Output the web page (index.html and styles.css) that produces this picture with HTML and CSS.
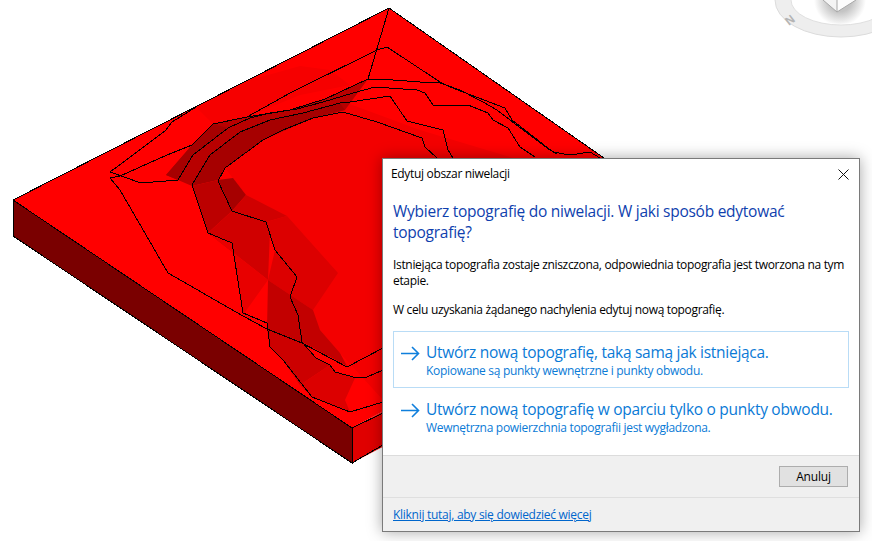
FILE: index.html
```html
<!DOCTYPE html>
<html lang="pl">
<head>
<meta charset="utf-8">
<title>Edytuj obszar niwelacji</title>
<link rel="stylesheet" href="styles.css">
</head>
<body>
<main class="desktop">
  <svg class="scene" width="872" height="541" viewBox="0 0 872 541" aria-hidden="true">
    <defs>
      <radialGradient id="cubeShadow" gradientUnits="userSpaceOnUse" cx="840" cy="0" r="26">
        <stop offset="0.45" stop-color="#c4c4c4"/>
        <stop offset="1" stop-color="#ffffff"/>
      </radialGradient>
    </defs>
    <!-- view cube -->
    <ellipse class="ring" cx="841" cy="0" rx="66" ry="37"/>
    <ellipse class="ring-hole" cx="841" cy="0" rx="50" ry="25"/>
    <ellipse cx="840" cy="0" rx="40" ry="24" fill="url(#cubeShadow)"/>
    <polygon class="cube-left" points="823,0 837,12 837,0"/>
    <polygon class="cube-right" points="837,0 837,12 856,0"/>
    <polyline class="cube-line" points="823,0 837,12 856,0"/>
    <polyline class="cube-line" points="837,12 837,0"/>
    <text class="ring-letter" x="0" y="0" transform="translate(789 26) rotate(-38)">N</text>

    <!-- terrain solid -->
    <polygon class="side-left" points="13,200 352,428 352,463 13,236"/>
    <polygon class="side-right" points="352,428 700,240 700,280 352,463"/>
    <polygon class="top" points="389,8 700,225 700,240 352,428 13,200"/>

    <!-- shaded facets -->
    <polygon class="f-e8" points="196,107 250,80 300,66 330,70 350,85 300,95 247,117 213,124"/>
    <polygon class="f-f0" points="225,168 263,140 313,118 347,103 420,130 520,160 600,180 640,250 383,400 340,353 320,330 300,290 270,230 246,195"/>
    <polygon class="f-b0" points="166,175 192,145 213,124 247,117 290,110 325,99 368,79 345,110 313,118 283,130 240,145 218,172 192,186 178,180"/>
    <polygon class="f-a8" points="192,145 213,124 228,128 193,155 178,180 166,175"/>
    <polygon class="f-a8" points="210,155 240,132 270,120 303,113 340,103 345,110 313,118 263,140 225,168 218,180 192,186"/>
    <polygon class="f-b8" points="192,186 218,180 232,211 208,233"/>
    <polygon class="f-a8" points="218,180 233,178 246,195 232,211"/>
    <polygon class="f-d0" points="232,211 246,195 287,216 266,222"/>
    <polygon class="f-d0" points="208,233 232,211 266,222 270,230 268,280"/>
    <polygon class="f-d8" points="266,222 287,216 338,273 313,310 268,280 275,250"/>
    <polygon class="f-e0" points="208,233 232,243 243,315 268,280"/>
    <polygon class="f-c0" points="268,280 313,310 320,330 340,353 347,366 302,342 267,329"/>
    <polygon class="f-c8" points="267,329 302,342 316,358 330,365 300,385 283,360 270,347"/>
    <polygon class="f-d8" points="300,385 330,365 335,372 355,378 345,400 350,412 312,397"/>

    <!-- contours -->
    <polyline class="contour" points="389,8 368,79"/>
    <polyline class="contour" points="110,172 165,131 172,122 196,107"/>
    <polyline class="contour" points="247,117 290,93 377,50 387,47 440,82 450,87 505,108 512,120 553,152 570,155 590,152 620,170"/>
    <polyline class="contour" points="557,154 550,150 527,133 497,110 483,102 460,90 440,83 420,82 393,80 368,79 325,99 290,110 247,117 213,124 192,145 167,155 120,176 110,178 120,190 168,273 243,316 267,329 302,343 347,367 383,348"/>
    <polyline class="contour" points="110,172 141,183 178,180 193,155 228,128 250,118 270,113 297,109 323,102 353,93 375,87 417,90 425,93 433,105 468,105 488,113 493,120 508,128 520,147 535,157"/>
    <polyline class="contour" points="453,158 448,150 443,130 407,121 390,96 350,102 340,103 303,113 270,120 240,132 210,155 192,185 208,233 232,243 243,313 267,323 270,347 283,360 312,397 350,412 383,402"/>
    <polyline class="contour" points="437,158 425,147 422,138 377,122 343,112 313,118 283,130 263,140 225,168 218,181 232,211 266,222 275,250 297,277 290,297 298,315 302,342 316,358 330,365 335,372 357,378 367,377 383,370"/>
    <polyline class="contour" points="352,428 383,413"/>

    <!-- outline -->
    <polyline class="edge" points="13,236 13,200 389,8 700,225"/>
    <polyline class="edge" points="13,200 352,428 352,463 13,236"/>
    <polyline class="edge" points="352,463 383,445"/>
  </svg>

  <section class="dialog" role="dialog" aria-labelledby="dlg-title">
    <header class="titlebar">
      <h1 id="dlg-title" class="title">Edytuj obszar niwelacji</h1>
      <svg class="close" width="11" height="11" viewBox="0 0 11 11" aria-hidden="true">
        <path d="M0.5 0.5L10.5 10.5M10.5 0.5L0.5 10.5"/>
      </svg>
    </header>
    <div class="content">
      <h2 class="heading">Wybierz topografię do niwelacji. W jaki sposób edytować topografię?</h2>
      <p class="body-text first">Istniejąca topografia zostaje zniszczona, odpowiednia topografia jest tworzona na tym etapie.</p>
      <p class="body-text second">W celu uzyskania żądanego nachylenia edytuj nową topografię.</p>
      <div class="choices">
        <a class="choice hover">
          <svg class="arrow" width="19" height="15" viewBox="0 0 19 15" aria-hidden="true"><path d="M0 7.5H17.5M11 1L17.5 7.5L11 14"/></svg>
          <span class="choice-text">
            <span class="choice-main">Utwórz nową topografię, taką samą jak istniejąca.</span>
            <span class="choice-sub">Kopiowane są punkty wewnętrzne i punkty obwodu.</span>
          </span>
        </a>
        <a class="choice">
          <svg class="arrow" width="19" height="15" viewBox="0 0 19 15" aria-hidden="true"><path d="M0 7.5H17.5M11 1L17.5 7.5L11 14"/></svg>
          <span class="choice-text">
            <span class="choice-main">Utwórz nową topografię w oparciu tylko o punkty obwodu.</span>
            <span class="choice-sub">Wewnętrzna powierzchnia topografii jest wygładzona.</span>
          </span>
        </a>
      </div>
    </div>
    <div class="actions"><button class="cancel" type="button">Anuluj</button></div>
    <footer class="footer"><a class="more" href="#">Kliknij tutaj, aby się dowiedzieć więcej</a></footer>
  </section>
</main>
</body>
</html>
```
FILE: styles.css
```css
* { box-sizing: border-box; }
html, body { margin: 0; padding: 0; background: #fff; }
.desktop { position: relative; width: 872px; height: 541px; overflow: hidden; font-family: "Open Sans", "Noto Sans", sans-serif; }
.scene { position: absolute; left: 0; top: 0; display: block; }

.ring { fill: #eeeeee; stroke: #dcdcdc; stroke-width: 1; }
.ring-hole { fill: #fff; stroke: #e0e0e0; stroke-width: 1; }
.cube-left { fill: #f4f4f4; }
.cube-right { fill: #fcfcfc; }
.cube-line { fill: none; stroke: #a8a8a8; stroke-width: 1; }
.ring-letter { font-family: "Liberation Sans", sans-serif; font-size: 12px; font-weight: 700; fill: #b4b4b4; }

.side-left { fill: #7a0000; }
.side-right { fill: #e00000; }
.top { fill: #ff0000; }
.f-e8 { fill: #f60000; }
.f-f0 { fill: #f30000; }
.f-b0 { fill: #b80000; }
.f-a8 { fill: #a60000; }
.f-b8 { fill: #bc0000; }
.f-c0 { fill: #c20000; }
.f-c8 { fill: #cc0000; }
.f-d0 { fill: #d00000; }
.f-d8 { fill: #dc0000; }
.f-e0 { fill: #e80000; }
.contour, .edge { fill: none; stroke: #000; stroke-width: 1; shape-rendering: crispEdges; }

.dialog {
  position: absolute; left: 382px; top: 158px; width: 478px; height: 374px;
  display: flex; flex-direction: column;
  background: #fff; border: 1px solid #7a7a7a;
  box-shadow: 0 0 14px rgba(0, 0, 0, .35);
  color: #000;
}
.titlebar { height: 31px; flex: none; display: flex; align-items: center; justify-content: space-between; padding: 0 10px 1px 8px; }
.title { margin: 0; font-size: 12px; font-weight: 400; letter-spacing: -.33px; line-height: 16px; }
.close { flex: none; }
.close path { fill: none; stroke: #111; stroke-width: 1; }

.content { flex: 1; padding: 11px 10px 0; min-height: 0; }
.heading { margin: 0; font-size: 15.5px; font-weight: 400; line-height: 21px; color: #0f3fae; letter-spacing: -.26px; max-width: 420px; }
.body-text { margin: 0; font-size: 12px; line-height: 16px; letter-spacing: -.33px; }
.first { margin-top: 14px; }
.second { margin-top: 13px; }

.choices { margin-top: 13px; display: flex; flex-direction: column; }
.choice { height: 57px; display: flex; align-items: flex-start; gap: 6px; padding: 11px 7px 0; border: 1px solid transparent; color: #0a7ad6; }
.choice + .choice { height: 58px; padding-top: 11px; }
.choice.hover { border-color: #b9dcf6; }
.arrow { flex: none; margin-top: 3px; }
.arrow path { fill: none; stroke: #0f7fdc; stroke-width: 1.6; }
.choice-text { display: flex; flex-direction: column; gap: 2px; }
.choice-main { font-size: 15.5px; line-height: 18px; letter-spacing: -.28px; white-space: nowrap; }
.choice-sub { font-size: 12px; line-height: 16px; letter-spacing: -.3px; white-space: nowrap; }

.actions { height: 42px; flex: none; display: flex; justify-content: flex-end; align-items: flex-start; padding: 10px 11px 0 0; background: #f0f0f0; border-top: 1px solid #dcdcdc; }
.cancel { width: 69px; height: 21px; padding: 0; background: #e1e1e1; border: 1px solid #adadad; font: 12px/18px "Open Sans", "Noto Sans", sans-serif; letter-spacing: -.2px; color: #000; }
.footer { height: 34px; flex: none; display: flex; align-items: center; padding: 0 10px; background: #f0f0f0; border-top: 1px solid #dfdfdf; }
.more { font-size: 12px; letter-spacing: -.28px; line-height: 16px; color: #0066cc; }
```
